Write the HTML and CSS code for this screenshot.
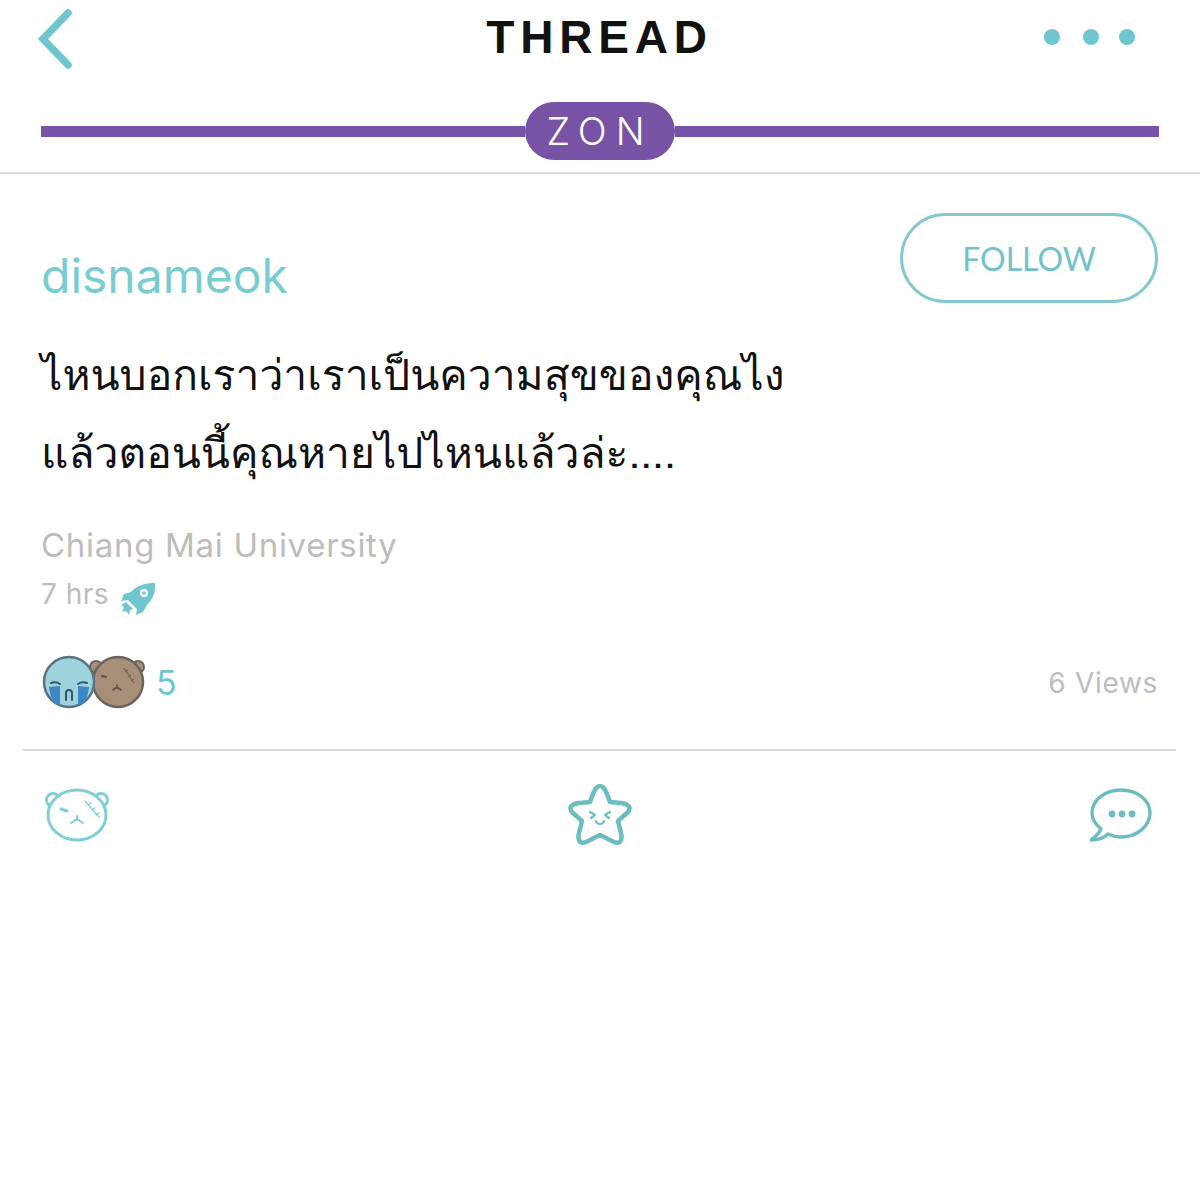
FILE: index.html
```html
<!DOCTYPE html>
<html lang="th">
<head>
    <meta charset="UTF-8">
    <meta name="viewport" content="width=device-width, initial-scale=1.0">
    <title>Thread</title>
    <link rel="stylesheet" href="styles.css">
</head>
<body>

    <header class="top">
        <div class="nav">
            <svg class="back" width="40" height="64" viewBox="0 0 40 64">
                <path d="M32 6 L7 32 L32 58" fill="none" stroke="#6fc6cf" stroke-width="7.5" stroke-linecap="round" stroke-linejoin="miter"/>
            </svg>
            <h1 class="title">THREAD</h1>
            <div class="dots"><span></span><span></span><span></span></div>
        </div>
        <div class="zone">
            <div class="zone-bar"></div>
            <div class="zone-pill">ZON</div>
            <div class="zone-bar"></div>
        </div>
    </header>

    <main class="post">
        <div class="post-head">
            <div class="author">disnameok</div>
            <button class="follow">FOLLOW</button>
        </div>

        <p class="message">ไหนบอกเราว่าเราเป็นความสุขของคุณไง<br>แล้วตอนนี้คุณหายไปไหนแล้วล่ะ....</p>

        <div class="school">Chiang Mai University</div>
        <div class="time">
            <span>7 hrs</span>
            <svg class="rocket" width="36" height="34" viewBox="0 0 36 34">
                <path d="M35 1 C26 1 17 3 11 10 L4 12 L1 19 L8 18 L17 27 L16 33 L23 30 L27 23 C33 17 36 10 35 1 Z" fill="#6fc6cf"/>
                <circle cx="24" cy="11" r="4" fill="#fff"/>
                <circle cx="24" cy="11" r="1.8" fill="#6fc6cf"/>
                <path d="M6 20 L13 27 L10 28 L9 33 L6 29 L2 30 L4 25 L1 23 Z" fill="#6fc6cf"/>
            </svg>
        </div>

        <div class="stats">
            <div class="reactions">
                <svg class="faces" width="104" height="56" viewBox="0 0 104 56">
                    <!-- bear -->
                    <circle cx="55" cy="13" r="6" fill="#a89078" stroke="#6a625d" stroke-width="2"/>
                    <circle cx="97" cy="13" r="6" fill="#a89078" stroke="#6a625d" stroke-width="2"/>
                    <circle cx="77" cy="28" r="25" fill="#a89078" stroke="#6a625d" stroke-width="2.5"/>
                    <path d="M61 22 L65 23" stroke="#5f5048" stroke-width="2" stroke-linecap="round"/>
                    <path d="M83 14 L93 29 M84 18 L87 16 M87 23 L90 21 M90 27 L93 25" stroke="#7a6655" stroke-width="1.2" fill="none"/>
                    <path d="M72 36 L76 33 L80 36 M76 31 L76 33" stroke="#5f5048" stroke-width="1.6" fill="none" stroke-linecap="round"/>
                    <!-- crying face -->
                    <circle cx="28" cy="28" r="25" fill="#9dd3dd" stroke="#5b7480" stroke-width="2.5"/>
                    <path d="M8 33 L19 32 L19 51 L14 50 C11 47 9 41 8 33 Z" fill="#3f86c4"/>
                    <path d="M37 32 L48 33 C47 41 45 47 42 50 L37 51 Z" fill="#3f86c4"/>
                    <path d="M10 29 C13 28 16 28 19 30 M37 30 C40 28 43 28 46 29" stroke="#33566a" stroke-width="2" fill="none" stroke-linecap="round"/>
                    <path d="M25 46 L25 39 C25 35 31 35 31 39 L31 46" fill="none" stroke="#33566a" stroke-width="2" stroke-linecap="round"/>
                </svg>
                <span class="count">5</span>
            </div>
            <div class="views">6 Views</div>
        </div>

        <div class="actions">
            <svg width="66" height="60" viewBox="0 0 66 60">
                <g fill="#fff" stroke="#7fcfd4" stroke-width="3" stroke-linecap="round">
                    <circle cx="9" cy="15" r="6.5"/>
                    <circle cx="57" cy="15" r="6.5"/>
                    <ellipse cx="33" cy="30" rx="29" ry="25"/>
                    <path d="M17 24 L23 26" stroke-width="3"/>
                    <path d="M27 38 L33 34 L39 38 M33 31 L33 34" stroke-width="2" fill="none"/>
                    <path d="M41 16 L55 32 M44 20 L47 18 M48 25 L51 23 M52 30 L55 28" stroke-width="1.3" fill="none"/>
                </g>
            </svg>
            <svg width="66" height="66" viewBox="0 0 66 66">
                <g fill="none" stroke="#6dbdc0" stroke-linecap="round" stroke-linejoin="round">
                    <path d="M33 4 C37 4 38 8 40 12 L43 20 L54 21 C62 22 65 26 60 31 L51 39 L54 51 C56 60 52 63 45 59 L33 53 L21 59 C14 63 10 60 12 51 L15 39 L6 31 C1 26 4 22 12 21 L23 20 L26 12 C28 8 29 4 33 4 Z" stroke-width="4.6"/>
                    <path d="M23 30 L28 33 L24 36 M43 30 L38 33 L42 36" stroke-width="2.2"/>
                    <path d="M29 39 C30 43 36 43 37 39" stroke-width="2.2"/>
                </g>
            </svg>
            <svg width="62" height="56" viewBox="0 0 62 56">
                <path d="M11 42 C5 37 2 32 2 26 C2 13 15 3 31 3 C47 3 60 13 60 26 C60 39 47 50 31 50 C26 50 22 49 18 47 C14 51 8 53 1 53 C5 50 9 47 11 42 Z" fill="none" stroke="#6dbdc0" stroke-width="3.4" stroke-linejoin="round"/>
                <circle cx="22" cy="27" r="3.4" fill="#6dbdc0"/>
                <circle cx="32" cy="27" r="3.4" fill="#6dbdc0"/>
                <circle cx="42" cy="27" r="3.4" fill="#6dbdc0"/>
            </svg>
        </div>
    </main>

</body>
</html>
```

FILE: styles.css
```css
body {
    margin: 0;
    background-color: #fff;
    font-family: Inter, "Noto Sans", sans-serif;
}

.top {
    height: 174px;
    box-sizing: border-box;
    border-bottom: 2px solid #dcdcdc;
    box-shadow: 0 1px 2px rgba(0, 0, 0, 0.06);
    padding: 0 41px;
}

.nav {
    height: 102px;
    display: grid;
    grid-template-columns: 1fr auto 1fr;
    align-items: start;
}

.back {
    margin: 7px 0 0 -5px;
}

.title {
    margin: 11px 0 0 -1px;
    font-family: "Liberation Sans", sans-serif;
    font-size: 46px;
    line-height: 52px;
    font-weight: 700;
    letter-spacing: 5.8px;
    color: #111;
}

.dots {
    display: flex;
    justify-content: flex-end;
    gap: 20px;
    margin: 29px 24px 0 0;
}

.dots span {
    width: 16px;
    height: 16px;
    border-radius: 50%;
    background-color: #6fc6cf;
}

.dots span:first-child {
    margin-right: 3px;
}

.zone {
    display: flex;
    align-items: center;
}

.zone-bar {
    flex: 1;
    height: 11px;
    background-color: #7853a5;
}

.zone-pill {
    width: 150px;
    height: 58px;
    border-radius: 29px;
    background-color: #7853a5;
    color: #fff;
    font-size: 38px;
    font-weight: 300;
    line-height: 58px;
    letter-spacing: 9px;
    text-align: center;
}

.post {
    padding: 0 42px 0 41px;
}

.post-head {
    display: flex;
    justify-content: space-between;
    padding-top: 39px;
}

.author {
    margin-top: 33px;
    font-size: 48px;
    line-height: 60px;
    color: #7accd3;
}

.follow {
    width: 258px;
    height: 90px;
    box-sizing: border-box;
    border: 3px solid #85c8cf;
    border-radius: 45px;
    background-color: #fff;
    color: #72c2ca;
    font-family: Lato, sans-serif;
    font-size: 32px;
    padding: 0;
}

.message {
    margin: 30px 0 0;
    font-family: Loma, "Noto Sans Thai Looped", "Noto Sans", sans-serif;
    font-size: 42.6px;
    line-height: 78px;
    color: #111;
}

.school {
    margin-top: 30px;
    font-size: 33px;
    line-height: 46px;
    letter-spacing: 0.7px;
    color: #bdbdbd;
}

.time {
    display: flex;
    align-items: center;
    gap: 11px;
    margin-top: 6px;
    font-size: 28px;
    line-height: 40px;
    letter-spacing: 0.5px;
    color: #bdbdbd;
}

.rocket {
    margin: 8px 0 -2px;
}

.stats {
    display: flex;
    justify-content: space-between;
    align-items: center;
    margin-top: 40px;
}

.reactions {
    display: flex;
    align-items: center;
    gap: 11px;
}

.count {
    font-size: 34px;
    color: #6fc6cf;
}

.views {
    margin-top: 2px;
    font-size: 28px;
    letter-spacing: 0.7px;
    color: #bdbdbd;
}

.actions {
    display: flex;
    justify-content: space-between;
    align-items: center;
    margin: 39px -18px 0;
    padding: 31px 24px 0 21px;
    border-top: 2px solid #d9d9d9;
}
```
